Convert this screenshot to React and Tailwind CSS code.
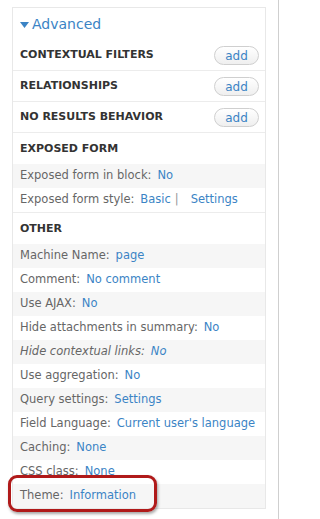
import React from 'react'

const sections = ["CONTEXTUAL FILTERS", "RELATIONSHIPS", "NO RESULTS BEHAVIOR"]

const otherRows = [
  { label: "Machine Name:", value: "page" },
  { label: "Comment:", value: "No comment" },
  { label: "Use AJAX:", value: "No" },
  { label: "Hide attachments in summary:", value: "No" },
  { label: "Hide contextual links:", value: "No", italic: true },
  { label: "Use aggregation:", value: "No" },
  { label: "Query settings:", value: "Settings" },
  { label: "Field Language:", value: "Current user's language" },
  { label: "Caching:", value: "None" },
  { label: "CSS class:", value: "None" },
  { label: "Theme:", value: "Information", highlight: true },
]

const Row = ({ striped, children }) => (
  <div className={`relative flex items-center h-[24px] px-[7px] whitespace-nowrap text-[11.5px] ${striped ? "bg-[#f6f6f6]" : "bg-white"}`}>
    {children}
  </div>
)

const App = () => {
  return (
    <div className="flex w-[280px] h-[519px] bg-white font-['DejaVu_Sans',sans-serif]">
      <div className="w-[278px] pt-[7px] pl-[12px]">
        <div className="w-[254px] border border-[#e8e8e8]">
          <div className="flex items-center h-[32px] pt-[1px] px-[7px] gap-[3px]">
            <svg width="9" height="6" viewBox="0 0 9 6"><polygon points="0,0 9,0 4.5,6" fill="#3b84c5" /></svg>
            <span className="text-[14px] text-[#3b84c5]">Advanced</span>
          </div>

          {sections.map((s) => (
            <div key={s} className="flex items-center justify-between h-[31px] pt-[1px] pl-[7px] pr-[6px] border-b border-[#ececec]">
              <span className="text-[11px] font-bold text-[#333]">{s}</span>
              <button className="w-[45px] h-[19px] rounded-full border border-[#cfcfcf] bg-gradient-to-b from-white to-[#efefef] text-[12px] leading-none text-[#3b84c5]">add</button>
            </div>
          ))}

          <div className="border-b border-[#ececec]">
            <div className="flex items-center h-[31px] pt-[2px] px-[7px]">
              <span className="text-[11px] font-bold text-[#333]">EXPOSED FORM</span>
            </div>
            <Row striped>
              <span className="text-[#666] mr-[6px]">Exposed form in block:</span>
              <span className="text-[#3b84c5]">No</span>
            </Row>
            <Row>
              <span className="text-[#666] mr-[6px]">Exposed form style:</span>
              <span className="text-[#3b84c5]">Basic</span>
              <span className="text-[#999] mx-[4px]">|</span>
              <span className="text-[#3b84c5] ml-[8px]">Settings</span>
            </Row>
          </div>

          <div className="flex items-center h-[31px] pt-[2px] px-[7px]">
            <span className="text-[11px] font-bold text-[#333]">OTHER</span>
          </div>
          {otherRows.map((r, i) => (
            <Row key={r.label} striped={i % 2 === 0}>
              <span className={`text-[#666] mr-[6px] ${r.italic ? "italic" : ""}`}>{r.label}</span>
              <span className={`text-[#3b84c5] ${r.italic ? "italic" : ""}`}>{r.value}</span>
              {r.highlight && (
                <div className="absolute left-[-5px] top-[-9px] w-[149px] h-[37px] rounded-[9px] border-[3px] border-[#b01a1a] shadow-[1px_2px_3px_rgba(0,0,0,0.35)]" />
              )}
            </Row>
          ))}
        </div>
      </div>
      <div className="w-px h-full bg-[#cfcfcf]" />
    </div>
  )
}

export default App
